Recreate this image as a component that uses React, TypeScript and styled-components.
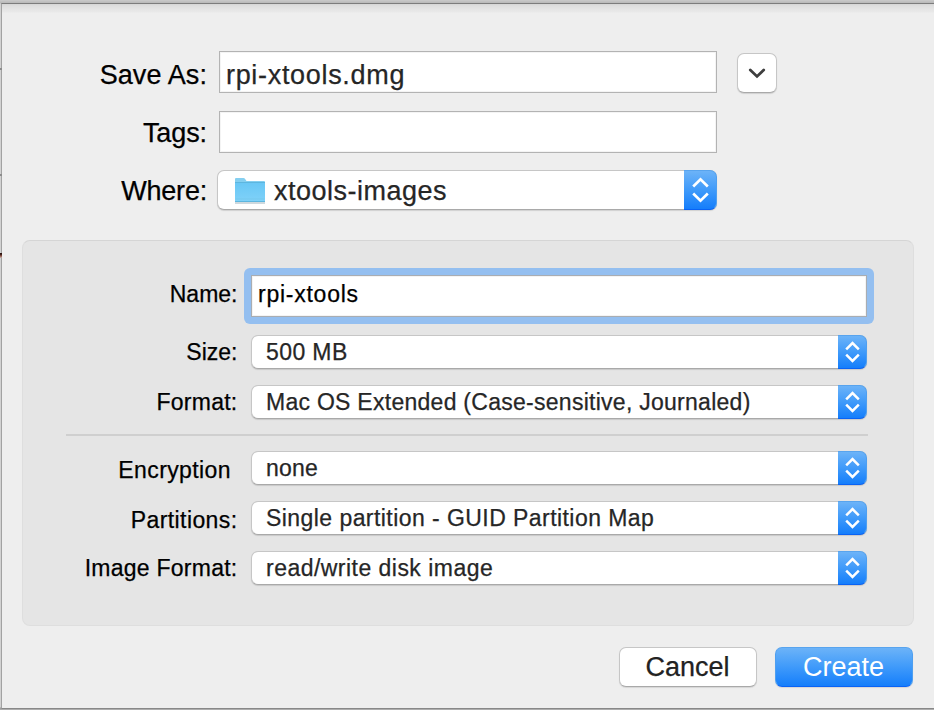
import React from "react";
import styled, { createGlobalStyle, css } from "styled-components";

const GlobalStyle = createGlobalStyle`
  * { box-sizing: border-box; }
  body { margin: 0; background: #cfcfcf; }
`;

const Backdrop = styled.div`
  width: 934px;
  height: 710px;
  overflow: hidden;
  padding: 3px 0 0 1px;
  background: linear-gradient(#cacaca 0, #b8b8b8 3px, #d2d2d2 4px, #d2d2d2 707px, #999 708px, #b4b4b4 710px);
  font-family: "Liberation Sans", Arial, sans-serif;
  font-size: 27px;
  color: #000;
  position: relative;
`;

const Sheet = styled.main`
  width: 933px;
  height: 706px;
  border: solid #a2a2a2;
  border-width: 1px 0 1px 1px;
  border-top-color: #7c7c7c;
  border-bottom-color: #888;
  padding: 47px 0 0 20px;
  background: linear-gradient(#d5d5d5 0, #dedede 2px, #e4e4e4 5px, #e9e9e9 8px, #eee 9px);
`;

const EdgeMark = styled.i<{ $top: number; $dark?: boolean }>`
  position: absolute;
  left: 0;
  top: ${(p) => p.$top}px;
  width: 2px;
  height: ${(p) => (p.$dark ? 5 : 2)}px;
  background: ${(p) => (p.$dark ? "linear-gradient(#2a100c 0 1px, #8d5548 3px, #c9b9b4)" : "#8c8c8c")};
`;

const FileRow = styled.div<{ $height: number; $gap: number }>`
  display: flex;
  align-items: center;
  height: ${(p) => p.$height}px;
  margin-bottom: ${(p) => p.$gap}px;
`;

const Text = styled.span<{ $track?: number; $drop?: number; $lift?: number; $thin?: boolean }>`
  display: block;
  white-space: pre;
  letter-spacing: ${(p) => p.$track ?? 0}px;
  padding-top: ${(p) => p.$drop ?? 0}px;
  padding-bottom: ${(p) => p.$lift ?? 0}px;
  -webkit-text-stroke: ${(p) => (p.$thin ? 0 : 0.25)}px currentColor;
`;

const FileLabel = styled.label`
  display: flex;
  justify-content: flex-end;
  width: 187px;
  padding-right: 2px;
  flex: none;
`;

const fieldBox = css`
  display: flex;
  align-items: center;
  height: 42px;
  border: 1px solid #b3b3b3;
  background: #fff;
  box-shadow: inset 0 0 0 1px #f4f4f4;
  padding-left: 6px;
`;

const FileField = styled.div`
  ${fieldBox}
  width: 498px;
  margin-left: 10px;
  color: #262626;
`;

const raised = css`
  border: 1px solid #c6c6c6;
  border-bottom-color: #a9a9a9;
  border-radius: 7px;
  background: #fff;
  box-shadow: 0 1px 1px rgba(0, 0, 0, 0.13);
`;

const blue = css`
  border: 1px solid #4e9ff0;
  border-top-color: #58a4ee;
  border-bottom-color: #0a63f5;
  background: linear-gradient(#6cb3f8, #3f9afa 50%, #157efb);
`;

const Disclosure = styled.button`
  ${raised}
  width: 40px;
  height: 40px;
  margin: 2px 0 0 20px;
  padding: 0;
  display: grid;
  place-items: center;
`;

const SelectBox = styled.div<{ $large?: boolean }>`
  ${raised}
  display: flex;
  align-items: center;
  width: ${(p) => (p.$large ? 500 : 616)}px;
  height: ${(p) => (p.$large ? 40 : 34)}px;
  margin-left: ${(p) => (p.$large ? 8 : 13)}px;
  padding-left: ${(p) => (p.$large ? 16 : 14)}px;
  color: #262626;
`;

const Stepper = styled.div<{ $large?: boolean }>`
  ${blue}
  border-left: 0;
  border-radius: 0 7px 7px 0;
  width: ${(p) => (p.$large ? 33 : 29)}px;
  height: ${(p) => (p.$large ? 40 : 34)}px;
  margin: 0 -1px 0 auto;
  display: grid;
  place-items: center;
`;

const FolderSlot = styled.div`
  width: 40px;
  height: 28px;
  margin-top: 2px;
  flex: none;
`;

const Panel = styled.section`
  width: 892px;
  height: 386px;
  margin-top: 30px;
  border: 1px solid #dedede;
  border-top-color: #d5d5d5;
  border-radius: 8px;
  background: #e5e5e5;
  padding-top: 27px;
  font-size: 23px;
`;

const PanelRow = styled.div`
  display: flex;
  height: 35px;
  margin-bottom: 15px;
`;

const PanelLabel = styled.label<{ $inset?: number }>`
  display: flex;
  justify-content: flex-end;
  align-items: center;
  width: 215px;
  height: 35px;
  flex: none;
  padding-right: ${(p) => p.$inset ?? 0.5}px;
`;

const NameRow = styled.div`
  display: flex;
  align-items: center;
  height: 56px;
  margin-bottom: 11px;
`;

const FocusRing = styled.div`
  margin-left: 6px;
  padding: 7px;
  border-radius: 6px;
  background: #94bff0;
`;

const NameField = styled.div`
  ${fieldBox}
  width: 616px;
  border-color: #a9adb2;
`;

const Divider = styled.hr`
  width: 802px;
  height: 2px;
  margin: -1px 0 15px 43px;
  border: 0;
  background: #cfcfcf;
`;

const Actions = styled.footer`
  display: flex;
  justify-content: flex-end;
  gap: 18px;
  padding: 21px 21px 0 0;
`;

const ActionButton = styled.button<{ $primary?: boolean }>`
  ${(p) => (p.$primary ? blue : raised)}
  border-radius: 7px;
  box-shadow: 0 1px 1px rgba(0, 0, 0, 0.1);
  width: 138px;
  height: 40px;
  padding: 0 1px 0 0;
  display: grid;
  place-items: center;
  font: 27px "Liberation Sans", Arial, sans-serif;
  color: ${(p) => (p.$primary ? "#fff" : "#222")};
`;

const Arrows = ({ large }: { large?: boolean }) => (
  <svg width={large ? 17 : 15} height={large ? 26 : 22} viewBox={large ? "0 0 17 26" : "0 0 15 22"} fill="none" stroke="#fff" strokeWidth={large ? 2.7 : 2.5}>
    <path d={large ? "M1.2 9.5L8.5 2.4L15.8 9.5M1.2 16.5L8.5 23.6L15.8 16.5" : "M1.2 8.3L7.5 2.1L13.8 8.3M1.2 13.7L7.5 19.9L13.8 13.7"} />
  </svg>
);

const Folder = () => (
  <svg width="32" height="28" viewBox="0 0 32 28">
    <defs>
      <linearGradient id="folderFront" x1="0" y1="0" x2="0" y2="1">
        <stop offset="0" stopColor="#69c7f5" />
        <stop offset="1" stopColor="#80d2f9" />
      </linearGradient>
    </defs>
    <path d="M1 26H31" stroke="#b5c4cc" strokeWidth="1.3" />
    <path d="M1 2Q1 1 2 1H9.5Q10.5 1 11.3 2.2L12.5 4H30Q31 4 31 5V25H1Z" fill="#85cff0" />
    <path d="M1 6H31V24.3Q31 25 30 25H2Q1 25 1 24.3Z" fill="url(#folderFront)" />
    <path d="M1 5.5H31M1 24.5H31" stroke="#5db6df" strokeWidth="1" />
    <path d="M1.5 22H30.5" stroke="#74c5ea" strokeWidth="0.7" />
  </svg>
);

type Option = { label: string; value: string; track: number; labelTrack: number; inset?: number; drop?: number };

const volume: Option[] = [
  { label: "Size:", value: "500 MB", track: 0.4, labelTrack: 0 },
  { label: "Format:", value: "Mac OS Extended (Case-sensitive, Journaled)", track: 0.27, labelTrack: 0.25 },
];

const image: Option[] = [
  { label: "Encryption", value: "none", track: 0.2, labelTrack: 0.4, inset: 7, drop: 4 },
  { label: "Partitions:", value: "Single partition - GUID Partition Map", track: 0.44, labelTrack: 0.4, drop: 4 },
  { label: "Image Format:", value: "read/write disk image", track: 0.47, labelTrack: 0.25 },
];

const OptionRow = ({ label, value, track, labelTrack, inset, drop }: Option) => (
  <PanelRow>
    <PanelLabel $inset={inset}><Text $track={labelTrack} $drop={drop}>{label}</Text></PanelLabel>
    <SelectBox>
      <Text $track={track} $drop={1}>{value}</Text>
      <Stepper><Arrows /></Stepper>
    </SelectBox>
  </PanelRow>
);

export default function App() {
  return (
    <>
      <GlobalStyle />
      <Backdrop>
        <EdgeMark $top={68} />
        <EdgeMark $top={174} />
        <EdgeMark $top={253} $dark />
        <Sheet>
          <FileRow $height={42} $gap={18}>
            <FileLabel><Text $track={0.1} $drop={6}>Save As:</Text></FileLabel>
            <FileField><Text $track={0.68} $drop={6}>rpi-xtools.dmg</Text></FileField>
            <Disclosure aria-label="Collapse">
              <svg width="20" height="14" viewBox="0 0 20 14" fill="none" stroke="#3e3e3e" strokeWidth="2.8" strokeLinecap="round">
                <path d="M3.3 4L10 10.4L16.7 4" />
              </svg>
            </Disclosure>
          </FileRow>
          <FileRow $height={42} $gap={17}>
            <FileLabel><Text $track={-0.1} $drop={2}>Tags:</Text></FileLabel>
            <FileField />
          </FileRow>
          <FileRow $height={40} $gap={0}>
            <FileLabel><Text $track={-0.2} $drop={2}>Where:</Text></FileLabel>
            <SelectBox $large>
              <FolderSlot><Folder /></FolderSlot>
              <Text $track={0.5} $drop={2}>xtools-images</Text>
              <Stepper $large><Arrows large /></Stepper>
            </SelectBox>
          </FileRow>
          <Panel>
            <NameRow>
              <PanelLabel><Text $track={0} $lift={3}>Name:</Text></PanelLabel>
              <FocusRing><NameField><Text $track={0.75} $lift={3}>rpi-xtools</Text></NameField></FocusRing>
            </NameRow>
            {volume.map((o) => <OptionRow key={o.label} {...o} />)}
            <Divider />
            {image.map((o) => <OptionRow key={o.label} {...o} />)}
          </Panel>
          <Actions>
            <ActionButton><Text>Cancel</Text></ActionButton>
            <ActionButton $primary><Text $thin>Create</Text></ActionButton>
          </Actions>
        </Sheet>
      </Backdrop>
    </>
  );
}
